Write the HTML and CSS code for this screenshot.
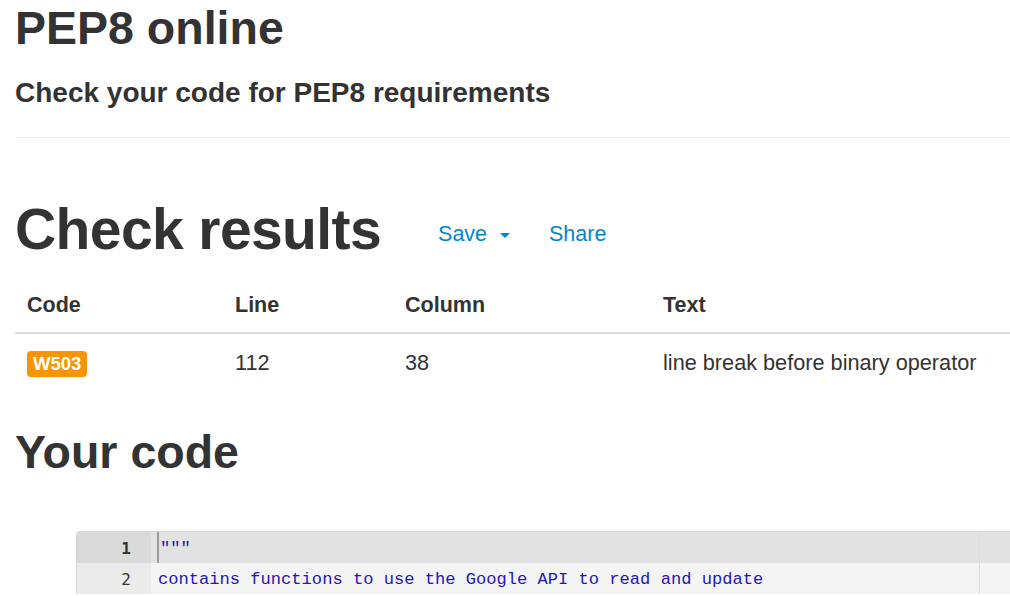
FILE: index.html
```html
<!DOCTYPE html>
<html>
<head>
<meta charset="utf-8">
<title>PEP8 online</title>
<link rel="stylesheet" href="styles.css">
</head>
<body>
<div class="container">
  <header class="page-header">
    <h1 class="title">PEP8 online</h1>
    <h2 class="subtitle">Check your code for PEP8 requirements</h2>
  </header>

  <div class="results-head">
    <h1 class="results-title">Check results</h1>
    <ul class="nav">
      <li><a href="#" class="nav-link">Save <span class="caret"></span></a></li>
      <li><a href="#" class="nav-link">Share</a></li>
    </ul>
  </div>

  <table class="results">
    <thead>
      <tr>
        <th class="c-code">Code</th>
        <th class="c-line">Line</th>
        <th class="c-col">Column</th>
        <th class="c-text">Text</th>
      </tr>
    </thead>
    <tbody>
      <tr>
        <td><span class="label">W503</span></td>
        <td>112</td>
        <td>38</td>
        <td>line break before binary operator</td>
      </tr>
    </tbody>
  </table>

  <h1 class="code-title">Your code</h1>

  <div class="editor">
    <div class="row active">
      <div class="gutter">1</div>
      <div class="code"><span class="cursor"></span><span class="str">"""</span></div>
      <div class="filler"></div>
    </div>
    <div class="row">
      <div class="gutter">2</div>
      <div class="code"><span class="str">contains functions to use the Google API to read and update</span></div>
      <div class="filler"></div>
    </div>
  </div>
</div>
</body>
</html>
```

FILE: styles.css
```css
html, body {
  margin: 0;
  padding: 0;
  overflow: hidden;
  background: #fff;
}

body {
  font-family: "Liberation Sans", Arial, sans-serif;
  color: #333;
  font-size: 21.5px;
}

.container {
  padding-left: 15px;
}

.page-header {
  border-bottom: 1px solid #eee;
  padding-bottom: 28px;
}

.title {
  margin: 3px 0 0 0;
  font-size: 46.5px;
  line-height: 1.1;
  font-weight: bold;
}

.subtitle {
  margin: 24px 0 0 0;
  font-size: 28px;
  line-height: 1.1;
  font-weight: bold;
}

.results-head {
  display: flex;
  align-items: flex-start;
  margin-top: 60px;
}

.results-title {
  margin: 0;
  font-size: 57px;
  letter-spacing: -0.6px;
  line-height: 1.1;
  font-weight: bold;
}

.nav {
  display: flex;
  list-style: none;
  margin: 0 0 0 57px;
  padding: 24px 0 0 0;
  gap: 39px;
}

.nav-link {
  color: #0088cc;
  text-decoration: none;
  font-size: 21.5px;
  line-height: 25px;
}

.caret {
  display: inline-block;
  width: 0;
  height: 0;
  margin-left: 7px;
  vertical-align: middle;
  border-top: 5px solid #0088cc;
  border-left: 5px solid transparent;
  border-right: 5px solid transparent;
}

.results {
  width: 100%;
  border-collapse: collapse;
  margin-top: 20px;
}

.results th,
.results td {
  text-align: left;
  padding: 12px 12px 0 12px;
  line-height: 24px;
  font-size: 21.7px;
}

.results th {
  font-weight: bold;
  padding-bottom: 15px;
  border-bottom: 2px solid #ddd;
  font-size: 21.5px;
}

.results td {
  padding-top: 16px;
  padding-bottom: 10px;
}

.c-code { width: 184px; }
.c-line { width: 146px; }
.c-col  { width: 234px; }

.label {
  display: inline-block;
  vertical-align: -1px;
  background: #f89406;
  color: #fff;
  font-weight: bold;
  font-size: 18.5px;
  line-height: 26px;
  padding: 0 6px;
  border-radius: 4px;
}

.code-title {
  margin: 40px 0 0 0;
  font-size: 46.5px;
  line-height: 1.1;
  font-weight: bold;
}

.editor {
  margin: 53px 0 0 61px;
  border-top: 1px solid #d4d4d4;
  border-left: 1px solid #d4d4d4;
  border-top-left-radius: 4px;
  overflow: hidden;
}

.row {
  display: flex;
  height: 31px;
  background: #f4f4f4;
}

.gutter {
  width: 74px;
  box-sizing: border-box;
  padding-right: 20px;
  text-align: right;
  background: #ebebeb;
  font-family: "DejaVu Sans Mono", monospace;
  font-size: 16px;
  line-height: 33px;
  color: #333;
}

.row.active {
  background: #e2e2e2;
}

.row.active .gutter {
  background: #dadada;
  font-weight: bold;
}

.code {
  position: relative;
  flex: 1;
  padding-left: 7px;
  font-family: "Liberation Mono", monospace;
  font-size: 17.1px;
  line-height: 34px;
  white-space: pre;
  border-right: 1px solid #dcdcdc;
}

.row.active .code {
  padding-left: 9px;
}

.cursor {
  position: absolute;
  left: 6px;
  top: 0;
  bottom: 0;
  width: 2px;
  background: #9a9a9a;
}

.str {
  color: #2316b8;
}

.filler {
  width: 30px;
}
```
